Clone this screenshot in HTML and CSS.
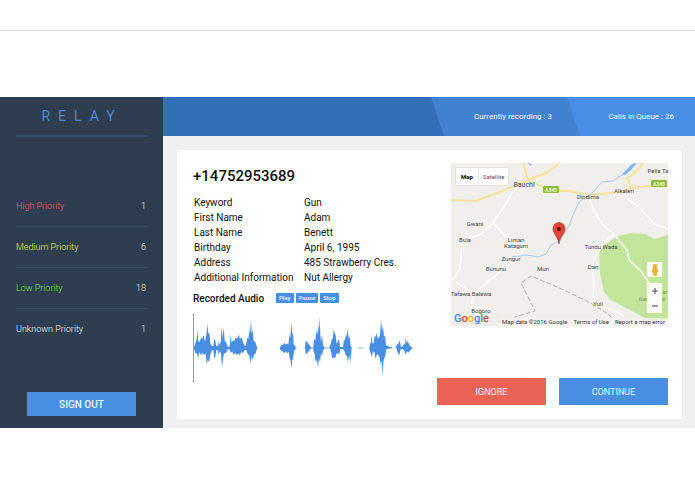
FILE: index.html
```
<!DOCTYPE html>
<html lang="en">
<head>
    <meta charset="UTF-8">
    <title>Relay</title>
    <link rel="stylesheet" href="styles.css">
</head>
<body>
    <div class="topbar"></div>

    <div class="app">
        <aside class="sidebar">
            <h1 class="logo">RELAY</h1>
            <ul class="priorities">
                <li class="high"><span>High Priority</span><span class="count">1</span></li>
                <li class="medium"><span>Medium Priority</span><span class="count">6</span></li>
                <li class="low"><span>Low Priority</span><span class="count">18</span></li>
                <li><span>Unknown Priority</span><span class="count">1</span></li>
            </ul>
            <button class="btn signout">SIGN OUT</button>
        </aside>

        <div class="content">
            <header class="header">
                <div class="stat recording">Currently recording : 3</div>
                <div class="stat queue">Calls in Queue : 26</div>
            </header>

            <main class="main">
                <div class="card">
                    <section class="details">
                        <h2>+14752953689</h2>
                        <table>
                            <tr><th>Keyword</th><td>Gun</td></tr>
                            <tr><th>First Name</th><td>Adam</td></tr>
                            <tr><th>Last Name</th><td>Benett</td></tr>
                            <tr><th>Birthday</th><td>April 6, 1995</td></tr>
                            <tr><th>Address</th><td>485 Strawberry Cres.</td></tr>
                            <tr><th>Additional Information</th><td>Nut Allergy</td></tr>
                        </table>
                        <div class="audio">
                            <h3>Recorded Audio</h3>
                            <button>Play</button>
                            <button>Pause</button>
                            <button>Stop</button>
                        </div>
                        <svg class="wave" viewBox="38 85 660 210">
                            <path class="cursor" d="M39 85V295"/>
                            <path class="quiet" d="M40 190H232M298 190H350M372 190H516M534 190H550M566 190H638M645 190H696"/>
                            <path class="sound" d="M41 188L46 172L49 165L52 136L54 170L58 172L62 158L65 164L70 152L74 172L78 150L81 118L84 148L87 142L90 176L94 184L99 184L102 162L105 168L108 184L112 184L115 172L118 182L121 172L124 126L127 160L130 128L133 168L138 174L142 186L148 186L151 150L154 176L158 166L162 170L166 158L170 162L175 150L179 164L184 158L188 172L193 184L197 182L201 158L204 164L207 132L209 150L212 104L214 146L217 136L220 168L225 172L230 188L230 192L226 206L221 210L217 224L213 214L210 238L207 212L203 210L198 196L193 196L188 206L183 202L178 212L174 206L170 212L165 204L160 210L155 200L151 206L148 194L142 194L137 206L131 206L128 222L125 250L122 208L118 198L115 210L112 196L108 196L105 216L102 222L99 196L94 198L90 210L86 232L82 226L79 240L76 206L71 212L66 204L62 212L57 202L53 222L50 204L46 208L41 192Z"/>
                            <path class="sound" d="M299 188L304 180L308 182L312 174L316 180L320 176L324 180L327 150L330 160L333 112L336 150L338 142L340 178L346 188L346 193L341 198L338 226L336 222L334 252L331 228L328 220L325 202L320 206L316 200L312 206L306 200L299 194Z"/>
                            <path class="sound" d="M374 188L376 168L381 172L386 180L394 189L386 198L381 206L376 208ZM399 184L402 162L405 168L408 138L411 150L414 120L416 140L418 94L420 152L422 172L425 148L428 182L433 188L428 198L425 216L422 204L419 232L416 220L413 250L410 226L406 232L403 208L399 198Z"/>
                            <path class="sound" d="M447 188L452 176L455 158L457 166L460 134L463 146L466 152L469 178L473 170L476 164L479 186L488 187L491 164L494 168L497 146L499 158L502 134L505 160L508 156L511 182L514 190L510 234L507 210L503 232L500 214L496 212L492 198L488 194L480 194L476 210L472 204L468 208L464 222L460 216L456 224L452 200Z"/>
                            <path class="sound" d="M567 188L570 174L572 176L574 146L576 176L580 176L583 154L586 156L589 144L592 162L596 158L599 150L602 104L605 140L608 122L611 158L614 150L617 182L636 189L618 193L615 214L612 220L609 232L607 274L604 228L601 242L598 218L594 212L590 208L586 224L583 204L578 200L574 216L571 206L567 193Z"/>
                            <path class="sound" d="M647 188L651 176L654 182L656 168L659 172L662 188L668 184L671 176L674 180L676 156L678 176L682 168L685 176L689 184L696 190L689 198L684 204L680 200L676 210L672 198L668 194L661 194L657 212L653 206Z"/>
                        </svg>
                    </section>

                    <section class="side">
                        <div class="map">
                            <svg viewBox="0 0 217 163">
                                <rect width="217" height="163" fill="#f1efeb"/>
                                <path fill="#c3e59b" d="M148 88C148 84 155 82 159 78L167 73L181 70L194 71L203 76L217 72V157H198L160 137L153 129L149 111Z"/>
                                <path class="road" d="M72 18L60 32L49 50L42 60L30 71L17 76L11 80L9 105L4 114L0 118M42 60L54 73L66 77L75 83L64 98L53 105L36 120L22 131L20 150M5 119L22 131M138 34L144 50L153 63L164 72L167 76L176 87L178 97L190 108L200 123L210 130M177 28L178 37L189 45L203 61L217 66M164 72L157 75L150 85L143 96L141 105L143 120L142 134L149 142L172 152"/>
                                <path class="highway" d="M0 37L24 38L47 30L63 23L77 17L100 28L118 28L138 32L170 29L180 25L217 21M77 17L72 0M77 17L93 11L108 1M180 25L176 15L186 8L192 0"/>
                                <path class="border" d="M60 163L64 154L84 148L72 124L70 120L80 113L104 123L138 139L157 151L170 163"/>
                                <path class="river" d="M61 94L76 92L87 94L95 91L100 82L108 78L118 63L122 52L128 39L142 29L151 19L162 18L174 10L184 0"/>
                                <path fill="#83b7ef" d="M171 11L181 1L186 0L180 7L174 12ZM76 0L81 1L80 3Z"/>
                                <g fill="#8fbd3a">
                                    <rect x="92" y="23" width="16" height="7" rx="1"/>
                                    <rect x="200" y="17" width="16" height="7" rx="1"/>
                                </g>
                                <g class="shield">
                                    <text x="100" y="29">A345</text>
                                    <text x="208" y="23">A345</text>
                                </g>
                                <g class="places">
                                    <text class="city" x="73" y="24">Bauchi</text>
                                    <text x="207" y="10">Pella Ta</text>
                                    <text x="173" y="30">Alkaleri</text>
                                    <text x="137" y="36">Dindima</text>
                                    <text x="24" y="63">Gwani</text>
                                    <text x="14" y="79">Bula</text>
                                    <text x="65" y="79">Liman</text>
                                    <text x="65" y="85">Katagum</text>
                                    <text x="150" y="86">Tundu Wada</text>
                                    <text x="60" y="98">Zungur</text>
                                    <text x="45" y="108">Bununu</text>
                                    <text x="92" y="108">Mun</text>
                                    <text x="142" y="106">Dan</text>
                                    <text x="20" y="133">Tafawa Balewa</text>
                                    <text x="30" y="150">Bogoro</text>
                                    <text x="147" y="143">Yuli</text>
                                    <text class="park" x="214" y="131">ar</text>
                                    <text class="park" x="201" y="138">Game Res</text>
                                </g>
                                <path fill="#ea4335" stroke="#a52b20" stroke-width=".6" d="M108 81C107 73 102 71 102 65.500A6 6 0 0 1 114 65.500C114 71 109 73 108 81Z"/>
                                <circle cx="108" cy="66" r="2" fill="#5a1510"/>
                                <text class="google" x="3" y="159"><tspan fill="#4285f4">G</tspan><tspan fill="#ea4335">o</tspan><tspan fill="#fbbc05">o</tspan><tspan fill="#4285f4">g</tspan><tspan fill="#34a853">l</tspan><tspan fill="#ea4335">e</tspan></text>
                            </svg>
                            <div class="map-type">
                                <button class="active">Map</button>
                                <button>Satellite</button>
                            </div>
                            <div class="map-controls">
                                <button class="pegman" aria-label="Street View">
                                    <svg viewBox="0 0 8 12">
                                        <circle cx="4" cy="2.200" r="2" fill="#f5b32f" stroke="#c98a1a" stroke-width=".4"/>
                                        <path fill="#f5b32f" stroke="#c98a1a" stroke-width=".4" d="M2 4.300H6L7 8L5.800 8.300L5.400 11.500H2.600L2.200 8.300L1 8Z"/>
                                    </svg>
                                </button>
                                <div class="zoom">
                                    <button aria-label="Zoom in"><svg viewBox="0 0 6 6"><path d="M3 0V6M0 3H6"/></svg></button>
                                    <button aria-label="Zoom out"><svg viewBox="0 0 6 6"><path d="M0 3H6"/></svg></button>
                                </div>
                            </div>
                            <div class="map-footer">
                                <span>Map data ©2016 Google</span>
                                <a href="#">Terms of Use</a>
                                <a href="#">Report a map error</a>
                            </div>
                        </div>
                        <div class="actions">
                            <button class="btn ignore">IGNORE</button>
                            <button class="btn">CONTINUE</button>
                        </div>
                    </section>
                </div>
            </main>
        </div>
    </div>
</body>
</html>
```
FILE: styles.css
```
* {
    box-sizing: border-box;
}
body {
    margin: 0;
    font-family: Roboto, Arial, sans-serif;
    background: #fefefe;
    color: #111;
}
h1, h2, h3, ul {
    margin: 0;
    padding: 0;
}
button {
    font-family: inherit;
    border: none;
    padding: 0;
    cursor: pointer;
}
svg {
    display: block;
}
.topbar {
    height: 31px;
    border-bottom: 1px solid #dcdae2;
    margin-bottom: 66px;
}
.app {
    display: flex;
}

/* Sidebar */
.sidebar {
    width: 163px;
    padding: 0 15px 12px 16px;
    background: #2e3d50;
    display: flex;
    flex-direction: column;
}
.logo {
    height: 40px;
    line-height: 38px;
    border-bottom: 2px solid #364f6e;
    color: #4a8ad8;
    font-size: 14px;
    font-weight: 400;
    letter-spacing: 8px;
    text-align: center;
}
.priorities {
    list-style: none;
    margin-top: 49px;
    color: #f2f4f6;
    font-size: 9px;
    font-weight: 300;
}
.priorities li {
    display: flex;
    justify-content: space-between;
    height: 41px;
    line-height: 41px;
    border-bottom: 1px solid #35495f;
}
.priorities li:last-child {
    border-bottom: none;
}
.priorities .count {
    color: #f2f4f6;
    padding-right: 2px;
}
.priorities .high {
    color: #ea5c5c;
}
.priorities .medium {
    color: #f0f145;
}
.priorities .low {
    color: #6fe83c;
}
.btn {
    width: 109px;
    height: 27px;
    background: #488ee2;
    color: #eef5fd;
    font-size: 9px;
}
.signout {
    height: 24px;
    margin: auto 0 0 11px;
    font-size: 10px;
    font-weight: 500;
}

/* Header */
.content {
    flex: 1;
    display: flex;
    flex-direction: column;
}
.header {
    display: flex;
    justify-content: flex-end;
    height: 39px;
    background: #336fb7;
}
.stat {
    line-height: 39px;
    color: #f4f8fd;
    font-size: 8px;
    font-weight: 400;
    text-align: right;
    clip-path: polygon(0 0, 100% 0, 100% 100%, 13px 100%);
}
.recording {
    width: 149px;
    margin-right: -13px;
    padding-right: 28px;
    background: #4182d0;
}
.queue {
    width: 128px;
    padding-right: 21px;
    background: #488ee4;
}

/* Call card */
.main {
    flex: 1;
    padding: 14px 13px 9px 14px;
    background: #f0f0f0;
}
.card {
    display: flex;
    justify-content: space-between;
    padding: 13px 14px 14px 16px;
    background: #fff;
}
.details h2 {
    margin-top: 3px;
    margin-bottom: 9px;
    line-height: 20px;
    font-size: 15px;
    font-weight: 500;
}
table {
    border-collapse: collapse;
    font-size: 10px;
    line-height: 15px;
}
th, td {
    padding: 0 1px;
    text-align: left;
    font-weight: 400;
}
th {
    width: 110px;
}
.audio {
    display: flex;
    align-items: center;
    gap: 2px;
    height: 20px;
    margin-top: 3px;
}
.audio h3 {
    width: 81px;
    font-size: 10px;
    font-weight: 500;
}
.audio button {
    height: 10px;
    padding: 0 3px;
    border-radius: 1px;
    background: #488ee2;
    color: #eef5fd;
    font-size: 6px;
    font-weight: 500;
    line-height: 10px;
}
.wave {
    width: 220px;
    height: 70px;
    margin-top: 5px;
}
.wave .cursor {
    stroke: #999;
    stroke-width: 4;
}
.wave .quiet {
    stroke: #488ee2;
    stroke-width: 2;
}
.wave .sound {
    fill: #488ee2;
}
.side {
    width: 231px;
    display: flex;
    flex-direction: column;
    align-items: flex-end;
}
.actions {
    display: flex;
    gap: 13px;
    margin-top: 52px;
}
.ignore {
    background: #eb6357;
}

/* Map */
.map {
    position: relative;
    width: 217px;
}
.road {
    fill: none;
    stroke: #fff;
    stroke-width: 1.5;
}
.highway {
    fill: none;
    stroke: #f9e19c;
    stroke-width: 2;
}
.river {
    fill: none;
    stroke: #a6c9f3;
    stroke-width: 1;
}
.border {
    fill: none;
    stroke: #b3b1ae;
    stroke-width: 1;
    stroke-dasharray: 5 2;
}
.places {
    fill: #444;
    font-size: 6px;
    text-anchor: middle;
}
.places .city {
    font-size: 7px;
}
.places .park {
    fill: #5d9141;
    font-style: italic;
}
.shield {
    fill: #f5f9d0;
    font-size: 5px;
    font-weight: 700;
    text-anchor: middle;
}
.google {
    font-size: 11px;
    font-weight: 500;
}
.map-type {
    position: absolute;
    top: 5px;
    left: 5px;
    display: flex;
    height: 17px;
    box-shadow: 0 0 1px rgba(0,0,0,0.3);
}
.map-type button {
    padding: 0 4px;
    background: #fff;
    color: #555;
    font-size: 6px;
}
.map-type .active {
    padding: 0 5px;
    border-right: 1px solid #e6e6e6;
    color: #000;
    font-weight: 700;
}
.map-controls {
    position: absolute;
    right: 6px;
    bottom: 13px;
    width: 15px;
}
.map-controls button {
    display: flex;
    align-items: center;
    justify-content: center;
    width: 15px;
    height: 15px;
    background: #fff;
}
.map-controls .pegman {
    margin-bottom: 6px;
}
.pegman svg {
    width: 8px;
    height: 12px;
}
.zoom svg {
    width: 6px;
    height: 6px;
    stroke: #555;
    stroke-width: 1.2;
}
.map-footer {
    position: absolute;
    right: 0;
    bottom: 0;
    display: flex;
    gap: 6px;
    padding: 0 3px;
    background: rgba(245,245,245,0.7);
    color: #333;
    font-size: 6px;
    line-height: 8px;
    white-space: nowrap;
}
.map-footer a {
    color: #333;
    text-decoration: none;
}
```
